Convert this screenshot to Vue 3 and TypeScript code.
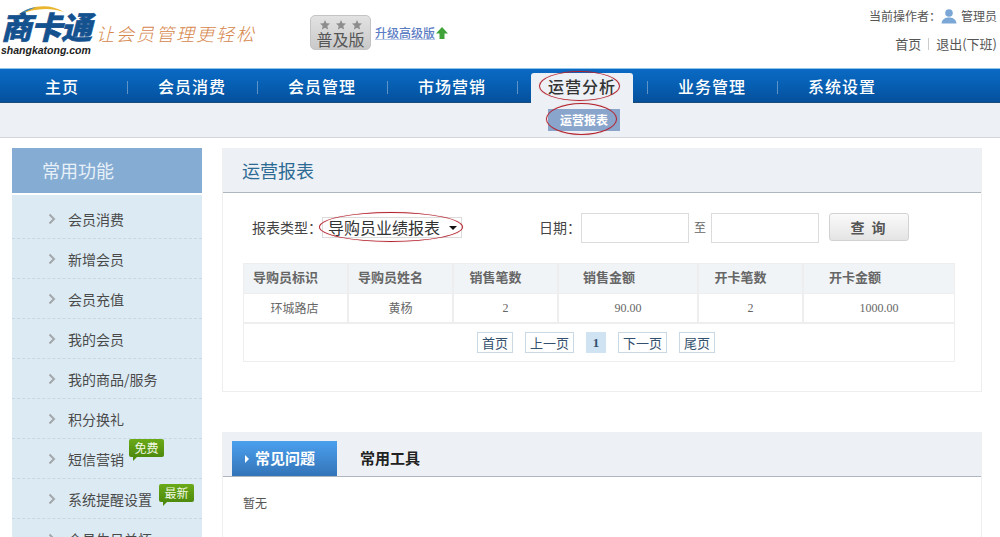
<script setup lang="ts">
const navItems: string[] = ['主页', '会员消费', '会员管理', '市场营销', '运营分析', '业务管理', '系统设置']
const sideItems: { label: string; badge?: string; badgeClass?: string }[] = [
  { label: '会员消费' },
  { label: '新增会员' },
  { label: '会员充值' },
  { label: '我的会员' },
  { label: '我的商品/服务' },
  { label: '积分换礼' },
  { label: '短信营销', badge: '免费', badgeClass: 'free' },
  { label: '系统提醒设置', badge: '最新', badgeClass: 'fresh' },
  { label: '会员生日关怀' },
]
const columns: string[] = ['导购员标识', '导购员姓名', '销售笔数', '销售金额', '开卡笔数', '开卡金额']
const row: string[] = ['环城路店', '黄杨', '2', '90.00', '2', '1000.00']
const pages: string[] = ['首页', '上一页', '1', '下一页', '尾页']
const star = 'M5 0 L6.4 3.3 L10 3.6 L7.3 6 L8.1 9.5 L5 7.7 L1.9 9.5 L2.7 6 L0 3.6 L3.6 3.3Z'
</script>

<template>
  <div class="page">
    <header class="top">
      <div class="logo">
        <svg class="swoosh" width="70" height="14" viewBox="0 0 70 14">
          <path d="M12 12 C24 2 44 0 58 9 C44 4 28 5 12 12Z" fill="#e9b52c" />
          <path d="M12 12 C18 7 24 5 30 4 C24 7 18 9 12 12Z" fill="#2d7fc4" />
        </svg>
        <div class="logo-cn">商卡通</div>
        <div class="logo-en">shangkatong.com</div>
      </div>
      <div class="slogan">让会员管理更轻松</div>
      <div class="edition">
        <svg class="stars" width="42" height="10" viewBox="0 0 42 10">
          <path :d="star" fill="#8d8d8d" />
          <path :d="star" fill="#8d8d8d" transform="translate(16 0)" />
          <path :d="star" fill="#8d8d8d" transform="translate(32 0)" />
        </svg>
        <div class="edition-name">普及版</div>
      </div>
      <a class="upgrade">升级高级版</a>
      <svg class="up" width="14" height="14" viewBox="0 0 14 14">
        <path d="M7 1 L13 7.5 H9.5 V13 H4.5 V7.5 H1Z" fill="#3fa33a" />
      </svg>
      <div class="user">
        <div class="user-line">
          <span>当前操作者：</span>
          <svg width="16" height="16" viewBox="0 0 16 16">
            <circle cx="8" cy="5" r="3.8" fill="#7ba7d6" />
            <path d="M0.5 15.5 C1 10.5 5 9.5 8 9.5 C11 9.5 15 10.5 15.5 15.5Z" fill="#7ba7d6" />
          </svg>
          <span>管理员</span>
        </div>
        <div class="user-links">
          <span>首页</span>
          <i class="pipe"></i>
          <span>退出(下班)</span>
        </div>
      </div>
    </header>

    <nav class="nav">
      <div
        v-for="(item, i) in navItems"
        :key="item"
        class="nav-item"
        :class="{ active: i === 4, last: i === navItems.length - 1 }"
      >
        <span class="nav-text">{{ item }}<i v-if="i === 4" class="ring ring-nav"></i></span>
      </div>
    </nav>
    <div class="subnav">
      <span class="sub-pill">运营报表<i class="ring ring-sub"></i></span>
    </div>

    <div class="body">
      <aside class="side">
        <h3 class="side-head">常用功能</h3>
        <ul class="side-list">
          <li v-for="item in sideItems" :key="item.label" class="side-item">
            <svg class="chev" width="8" height="12" viewBox="0 0 8 12">
              <path d="M1.5 1.5 L6 6 L1.5 10.5" fill="none" stroke="#a3a7aa" stroke-width="2" />
            </svg>
            <span>{{ item.label }}</span>
            <em v-if="item.badge" class="badge" :class="item.badgeClass">{{ item.badge }}</em>
          </li>
        </ul>
      </aside>

      <main class="main">
        <section class="panel report">
          <h2 class="panel-head">运营报表</h2>
          <div class="filters">
            <span class="f-label">报表类型：</span>
            <span class="select">导购员业绩报表<i class="caret"></i><i class="ring ring-select"></i></span>
            <span class="f-label date-label">日期：</span>
            <span class="input"></span>
            <span class="to">至</span>
            <span class="input"></span>
            <button class="query" type="button">查 询</button>
          </div>
          <div class="table">
            <div class="tr head">
              <div v-for="c in columns" :key="c" class="td">{{ c }}</div>
            </div>
            <div class="tr cells">
              <div v-for="(c, i) in row" :key="i" class="td">{{ c }}</div>
            </div>
            <div class="pager">
              <span
                v-for="p in pages"
                :key="p"
                class="pg"
                :class="{ current: p === '1' }"
              >{{ p }}</span>
            </div>
          </div>
        </section>

        <section class="panel faq">
          <div class="tabs">
            <span class="tab on"><i class="tri"></i>常见问题</span>
            <span class="tab">常用工具</span>
          </div>
          <p class="none">暂无</p>
        </section>
      </main>
    </div>
  </div>
</template>

<style>
html, body { margin: 0; background: #fff; overflow: hidden; }
</style>

<style scoped>
.page {
  width: 1000px;
  height: 537px;
  overflow: hidden;
  background: #fff;
  font-family: "Noto Sans CJK SC", "Liberation Sans", sans-serif;
  font-size: 12px;
  color: #555;
}
.top {
  height: 68px;
  display: flex;
  align-items: flex-start;
  position: relative;
}
.logo {
  width: 95px;
  height: 58px;
  position: relative;
  flex: none;
}
.swoosh { position: absolute; left: 6px; top: 3px; }
.logo-cn {
  position: absolute;
  left: 1px;
  top: 9px;
  font-size: 31px;
  line-height: 34px;
  font-weight: 900;
  font-style: italic;
  letter-spacing: -1px;
  color: #14518f;
  -webkit-text-stroke: 0.6px #14518f;
}
.logo-en {
  position: absolute;
  left: 1px;
  top: 43px;
  font-family: "Liberation Sans", sans-serif;
  font-size: 10.5px;
  line-height: 14px;
  font-weight: 700;
  font-style: italic;
  color: #222;
}
.slogan {
  margin: 21px 0 0 1px;
  width: 214px;
  flex: none;
  font-size: 18px;
  line-height: 24px;
  font-style: italic;
  font-weight: 300;
  letter-spacing: 2px;
  color: #d6874c;
}
.edition {
  width: 61px;
  height: 35px;
  margin-top: 15px;
  flex: none;
  box-sizing: border-box;
  border: 1px solid #c4c4c4;
  border-radius: 5px;
  background: linear-gradient(#e2e2e2, #c9c9c9);
  text-align: center;
  color: #555;
}
.stars {
  display: block;
  margin: 4px auto 0;
}
.edition-name {
  font-size: 16px;
  line-height: 19px;
  color: #555;
}
.upgrade {
  margin: 24px 0 0 4px;
  font-size: 12px;
  font-weight: 500;
  line-height: 17px;
  color: #5c7cc4;
  text-decoration: underline;
  text-decoration-color: #b9c8e6;
}
.up { margin-top: 26px; flex: none; }
.user {
  margin-left: auto;
  padding-right: 3px;
  width: 130px;
  flex: none;
}
.user-line {
  height: 16px;
  margin-top: 8px;
  display: flex;
  align-items: center;
  justify-content: flex-end;
  gap: 4px;
  line-height: 16px;
}
.user-line span:first-child { margin-right: -4px; }
.user-links {
  margin-top: 12px;
  display: flex;
  justify-content: flex-end;
  align-items: center;
  gap: 7px;
  font-size: 13px;
  line-height: 16px;
}
.pipe {
  width: 1px;
  height: 12px;
  background: #ccc;
}
.nav {
  height: 35px;
  display: flex;
  box-sizing: border-box;
  background: linear-gradient(#0a6ac4 0%, #0760b4 45%, #05509c 100%);
  border-top: 1px solid #8cc4ea;
  border-bottom: 1px solid #1a4a78;
}
.nav-item {
  width: 130px;
  flex: none;
  display: flex;
  align-items: center;
  justify-content: center;
  color: #fff;
  font-size: 16px;
  font-weight: 500;
  letter-spacing: 1px;
  position: relative;
}
.nav-item:first-child { width: 127px; padding-right: 3px; box-sizing: border-box; }
.nav-item::after {
  content: "";
  position: absolute;
  right: -1px;
  top: 12px;
  height: 13px;
  width: 1px;
  background: #5f93c6;
}
.nav-item.last::after { display: none; }
.nav-item.active { color: #333; }
.nav-item.active::before {
  content: "";
  position: absolute;
  left: 14px;
  right: 14px;
  top: 4px;
  bottom: -1px;
  background: #edf0f4;
  border-radius: 3px 3px 0 0;
}
.nav-text { position: relative; line-height: 22px; }
.ring {
  position: absolute;
  border: 1px solid #b3202c;
  border-radius: 50%;
  box-shadow: 0 0 1px rgba(179, 32, 44, .5);
  pointer-events: none;
}
.ring-nav { left: -9px; right: -4px; top: -4px; bottom: -4px; }
.subnav {
  height: 35px;
  box-sizing: border-box;
  background: #edf0f4;
  border-bottom: 1px solid #d4d7da;
  padding: 6px 0 0 548px;
}
.sub-pill {
  display: block;
  position: relative;
  width: 72px;
  height: 22px;
  background: #8aa5cb;
  color: #fff;
  font-size: 12px;
  font-weight: 700;
  line-height: 22px;
  text-align: center;
}
.ring-sub { left: -2px; right: 3px; top: -6px; bottom: -4px; }
.body {
  display: flex;
  align-items: flex-start;
  padding: 10px 18px 0 12px;
  gap: 20px;
}
.side { width: 190px; flex: none; }
.side-head {
  margin: 0 0 2px;
  height: 45px;
  padding-left: 30px;
  background: #85add3;
  color: #e8f0f8;
  font-size: 18px;
  font-weight: 400;
  line-height: 44px;
}
.side-list {
  margin: 0;
  padding: 4px 0 0;
  list-style: none;
  background: #dceaf4;
}
.side-item {
  height: 40px;
  box-sizing: border-box;
  border-bottom: 1px dashed #c8d8e4;
  display: flex;
  align-items: center;
  padding-left: 36px;
  font-size: 14px;
  color: #4a4a4a;
  position: relative;
}
.chev { margin-right: 12px; flex: none; }
.badge {
  position: absolute;
  height: 18px;
  width: 35px;
  border-radius: 2px;
  background: linear-gradient(#6aaa18, #4e8a0c);
  color: #f1f8e4;
  font-size: 12px;
  font-style: normal;
  line-height: 18px;
  text-align: center;
}
.badge::after {
  content: "";
  position: absolute;
  left: 4px;
  top: 18px;
  border-top: 4px solid #4e8a0c;
  border-right: 4px solid transparent;
}
.free { left: 117px; top: 0; }
.fresh { left: 147px; top: 5px; }
.main { width: 760px; flex: none; }
.panel {
  box-sizing: border-box;
  border: 1px solid #eeeeee;
  border-top: 0;
}
.report { height: 244px; }
.panel-head {
  margin: 0;
  height: 45px;
  box-sizing: border-box;
  padding-left: 19px;
  background: #edf1f5;
  border-bottom: 1px solid #aeb7c0;
  color: #2c6a94;
  font-size: 18px;
  font-weight: 400;
  line-height: 44px;
}
.filters {
  height: 30px;
  margin-top: 20px;
  padding-left: 29px;
  display: flex;
  align-items: flex-start;
}
.f-label {
  font-size: 14px;
  line-height: 28px;
  color: #444;
  white-space: nowrap;
}
.select {
  position: relative;
  width: 140px;
  height: 21px;
  margin-top: 4px;
  box-sizing: border-box;
  padding-left: 5px;
  border: 1px solid #dcdcdc;
  font-size: 16px;
  line-height: 19px;
  color: #333;
  white-space: nowrap;
}
.caret {
  position: absolute;
  right: 4px;
  top: 8px;
  border-top: 4px solid #111;
  border-left: 4px solid transparent;
  border-right: 4px solid transparent;
}
.ring-select { left: -4px; right: -2px; top: -6px; bottom: -5px; }
.date-label { margin-left: 77px; width: 42px; }
.input {
  width: 108px;
  height: 30px;
  box-sizing: border-box;
  border: 1px solid #dcdcdc;
  flex: none;
}
.to {
  width: 22px;
  text-align: center;
  line-height: 28px;
  color: #666;
}
.query {
  margin: 0 0 0 10px;
  width: 80px;
  height: 28px;
  padding: 0;
  border: 1px solid #d2d2d2;
  border-radius: 3px;
  background: linear-gradient(#fafafa, #e4e4e4);
  font-family: inherit;
  font-size: 14px;
  font-weight: 700;
  letter-spacing: 2px;
  color: #555;
}
.table {
  margin: 20px 0 0 20px;
  width: 712px;
  box-sizing: border-box;
  border: 1px solid #eeeeee;
}
.tr {
  display: grid;
  grid-template-columns: 105px 105px 105px 140px 105px 1fr;
  height: 30px;
  border-bottom: 1px solid #eeeeee;
  box-sizing: border-box;
}
.td {
  border-right: 2px solid #eeeeee;
  text-align: center;
  line-height: 28px;
}
.td:last-child { border-right: 0; }
.head { background: #f0f4f7; }
.head .td {
  font-size: 13px;
  font-weight: 700;
  color: #666;
  line-height: 25px;
}
.head .td:nth-child(1), .head .td:nth-child(2) { text-align: left; padding-left: 9px; }
.head .td:nth-child(3) { padding-right: 20px; }
.head .td:nth-child(4) { padding-right: 38px; }
.head .td:nth-child(5) { padding-right: 20px; }
.head .td:nth-child(6) { padding-right: 48px; }
.cells { color: #666; border-bottom-width: 2px; }
.cells .td:nth-child(1) { padding-right: 2px; }
.cells .td:nth-child(3), .cells .td:nth-child(4), .cells .td:nth-child(5), .cells .td:nth-child(6) {
  font-family: "Liberation Serif", serif;
}
.pager {
  height: 37px;
  display: flex;
  align-items: center;
  justify-content: center;
  gap: 12px;
  padding-right: 6px;
}
.pg {
  height: 21px;
  box-sizing: border-box;
  padding: 0 4px;
  border: 1px solid #c8d8e4;
  font-size: 13px;
  color: #33506e;
  line-height: 19px;
}
.current {
  width: 20px;
  padding: 0;
  text-align: center;
  background: #cfe3f2;
  border-color: #cfe3f2;
  font-family: "Liberation Serif", serif;
  font-weight: 700;
}
.faq { margin-top: 40px; height: 120px; }
.tabs {
  height: 45px;
  box-sizing: border-box;
  background: #edf1f5;
  border-bottom: 1px solid #aeb7c0;
  padding: 9px 0 0 9px;
  display: flex;
}
.tab {
  width: 105px;
  height: 35px;
  flex: none;
  box-sizing: border-box;
  font-size: 15px;
  font-weight: 700;
  line-height: 34px;
  color: #222;
  padding-left: 23px;
  position: relative;
}
.tab.on {
  background: linear-gradient(#4aa0ee, #3474b8);
  color: #fff;
}
.tri {
  position: absolute;
  left: 13px;
  top: 14px;
  border-left: 4px solid #fff;
  border-top: 4px solid transparent;
  border-bottom: 4px solid transparent;
}
.none {
  margin: 17px 0 0 20px;
  line-height: 18px;
  color: #555;
}
</style>
